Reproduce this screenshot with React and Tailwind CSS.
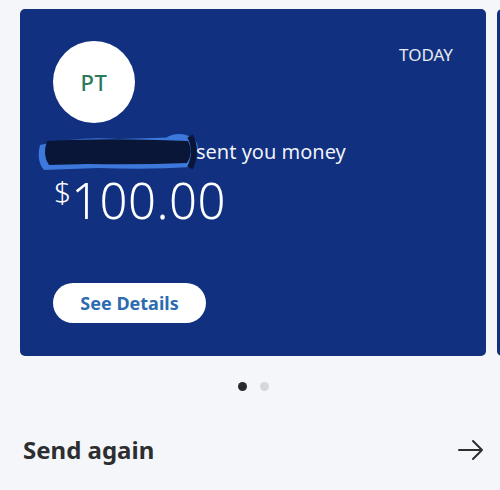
export default function App() {
  return (
    <div className="w-[500px] h-[490px] bg-[#f5f6fa] overflow-hidden" style={{ fontFamily: '"Noto Sans", "Open Sans", sans-serif' }}>
      <div className="flex gap-[11px] pt-[9px] pl-[20px]">
        <div className="w-[466px] h-[347px] shrink-0 bg-[#11307f] rounded-[5px] relative">
          <div className="flex justify-between pl-[33px] pr-[33px] pt-[32px]">
            <div className="w-[82px] h-[82px] rounded-full bg-white flex items-center justify-center text-[22px] font-medium text-[#2b7a5c] tracking-wide">
              PT
            </div>
            <div className="text-[17px] text-white/90 mt-[1px]">TODAY</div>
          </div>
          <div className="flex items-center mt-[10px] pl-[18px] h-[38px] text-[20px] text-white/95">
            <svg width="162" height="38" viewBox="0 0 162 38" className="shrink-0 block h-[38px] w-[162px]">
              <path d="M2 12 Q40 3 80 6 L150 4 Q164 14 154 34 Q110 37 60 35 L6 37 Q-2 28 2 12Z" fill="#3d78dc" />
              <ellipse cx="141" cy="15" rx="17" ry="12" fill="none" stroke="#3d78dc" strokeWidth="4" />
              <path d="M9 8 Q60 5 120 7 L150 8 Q156 19 149 30 Q100 32 50 31 L11 32 Q4 22 9 8Z" fill="#0a1638" />
              <path d="M152 3 Q160 18 152 35" stroke="#0a1638" strokeWidth="6" fill="none" />
            </svg>
            <span className="-ml-[4px]">sent you money</span>
          </div>
          <div className="flex items-start pl-[34px] mt-[5px] text-white font-light">
            <span className="text-[30px] leading-none mt-[1px]">$</span>
            <span className="text-[49px] leading-none tracking-[0.5px]">100.00</span>
          </div>
          <button className="absolute left-[33px] top-[274px] w-[153px] h-[40px] rounded-full bg-white text-[#2c6bb0] text-[18px] font-bold">
            See Details
          </button>
        </div>
        <div className="w-[466px] h-[347px] shrink-0 bg-[#11307f] rounded-[5px]" />
      </div>
      <div className="flex justify-center gap-[13px] mt-[26px] pl-[6px]">
        <div className="w-[9px] h-[9px] rounded-full bg-[#2a2a2e]" />
        <div className="w-[9px] h-[9px] rounded-full bg-[#d6d7da]" />
      </div>
      <div className="flex items-center justify-between pl-[23px] pr-[16px] mt-[41px]">
        <div className="text-[24px] font-bold text-[#2c2e2f]">Send again</div>
        <svg width="26" height="22" viewBox="0 0 26 22" fill="none" stroke="#2c2e2f" strokeWidth="2" strokeLinecap="round" strokeLinejoin="round">
          <path d="M1 11 H24 M15 2 L24 11 L15 20" />
        </svg>
      </div>
    </div>
  )
}
